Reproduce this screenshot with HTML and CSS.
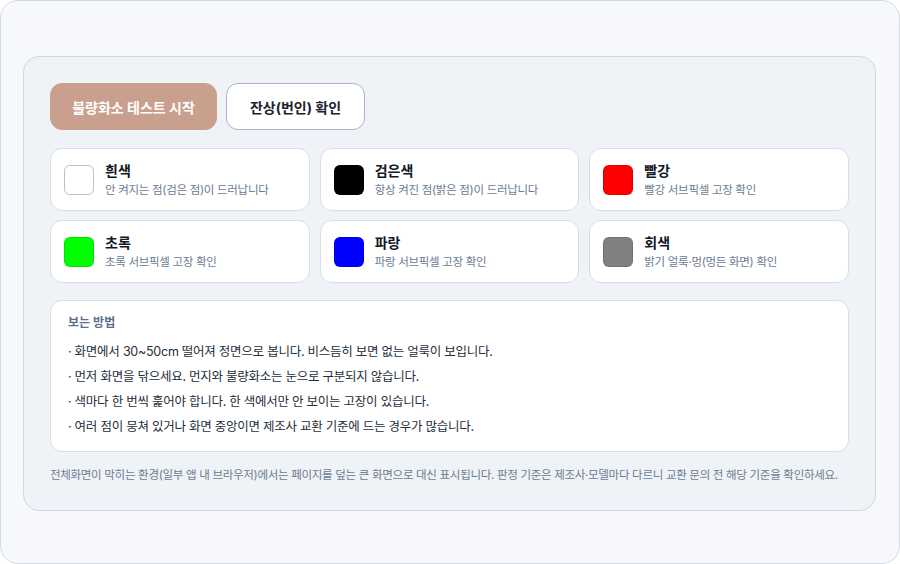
FILE: index.html
```html
<!DOCTYPE html>
<html lang="ko">
<head>
<meta charset="utf-8">
<title>불량화소 테스트</title>
<link rel="stylesheet" href="styles.css">
</head>
<body>
<div class="frame">
  <section class="panel">
    <div class="actions">
      <button class="btn btn-primary">불량화소 테스트 시작</button>
      <button class="btn btn-outline">잔상(번인) 확인</button>
    </div>
    <div class="colors">
      <div class="color-card">
        <span class="swatch swatch-white"></span>
        <div class="color-text">
          <div class="color-name">흰색</div>
          <div class="color-desc">안 켜지는 점(검은 점)이 드러납니다</div>
        </div>
      </div>
      <div class="color-card">
        <span class="swatch swatch-black"></span>
        <div class="color-text">
          <div class="color-name">검은색</div>
          <div class="color-desc">항상 켜진 점(밝은 점)이 드러납니다</div>
        </div>
      </div>
      <div class="color-card">
        <span class="swatch swatch-red"></span>
        <div class="color-text">
          <div class="color-name">빨강</div>
          <div class="color-desc">빨강 서브픽셀 고장 확인</div>
        </div>
      </div>
      <div class="color-card">
        <span class="swatch swatch-green"></span>
        <div class="color-text">
          <div class="color-name">초록</div>
          <div class="color-desc">초록 서브픽셀 고장 확인</div>
        </div>
      </div>
      <div class="color-card">
        <span class="swatch swatch-blue"></span>
        <div class="color-text">
          <div class="color-name">파랑</div>
          <div class="color-desc">파랑 서브픽셀 고장 확인</div>
        </div>
      </div>
      <div class="color-card">
        <span class="swatch swatch-gray"></span>
        <div class="color-text">
          <div class="color-name">회색</div>
          <div class="color-desc">밝기 얼룩·멍(멍든 화면) 확인</div>
        </div>
      </div>
    </div>
    <div class="guide">
      <div class="guide-title">보는 방법</div>
      <ul class="guide-list">
        <li>· 화면에서 30~50cm 떨어져 정면으로 봅니다. 비스듬히 보면 없는 얼룩이 보입니다.</li>
        <li>· 먼저 화면을 닦으세요. 먼지와 불량화소는 눈으로 구분되지 않습니다.</li>
        <li>· 색마다 한 번씩 훑어야 합니다. 한 색에서만 안 보이는 고장이 있습니다.</li>
        <li>· 여러 점이 뭉쳐 있거나 화면 중앙이면 제조사 교환 기준에 드는 경우가 많습니다.</li>
      </ul>
    </div>
    <p class="note">전체화면이 막히는 환경(일부 앱 내 브라우저)에서는 페이지를 덮는 큰 화면으로 대신 표시됩니다. 판정 기준은 제조사·모델마다 다르니 교환 문의 전 해당 기준을 확인하세요.</p>
  </section>
</div>
</body>
</html>
```

FILE: styles.css
```css
* { box-sizing: border-box; }
html, body { margin: 0; padding: 0; }
body {
  font-family: "Inter", "Noto Sans CJK KR", sans-serif;
  background: #ffffff;
  width: 900px;
  height: 564px;
}
.frame {
  width: 900px;
  height: 564px;
  border: 1px solid #d4dae3;
  border-radius: 18px;
  background: #f6f8fb;
  padding: 55px 23px 0 22px;
}
.panel {
  border: 1px solid #cfd7e2;
  border-radius: 16px;
  background: #eff3f7;
  padding: 26px 26px 0 26px;
  height: 455px;
}
.actions {
  display: flex;
  gap: 9px;
}
.btn {
  font-family: inherit;
  height: 47px;
  border-radius: 12px;
  font-size: 14px;
  font-weight: 700;
  padding: 0 18px;
  cursor: pointer;
}
.btn-primary {
  width: 167px;
  background: #c9a08d;
  border: 1px solid #c9a08d;
  color: #ffffff;
}
.btn-outline {
  width: 139px;
  background: #ffffff;
  border: 1px solid #a9b6c8;
  color: #1c2331;
}
.colors {
  margin-top: 18px;
  display: grid;
  grid-template-columns: repeat(3, 1fr);
  gap: 9px 10px;
}
.color-card {
  height: 63px;
  background: #ffffff;
  border: 1px solid #d8dee7;
  border-radius: 12px;
  display: flex;
  align-items: center;
  padding: 0 13px;
  gap: 11px;
}
.swatch {
  width: 30px;
  height: 30px;
  border-radius: 6px;
  flex: none;
  border: 1px solid rgba(0,0,0,0.12);
}
.swatch-white { background: #ffffff; border-color: #b8c1cf; }
.swatch-black { background: #000000; }
.swatch-red { background: #ff0000; }
.swatch-green { background: #00ff00; }
.swatch-blue { background: #0000ff; }
.swatch-gray { background: #808080; }
.color-text { display: flex; flex-direction: column; gap: 2px; }
.color-name {
  font-size: 14px;
  font-weight: 700;
  color: #121826;
  line-height: 18px;
}
.color-desc {
  font-size: 11.5px;
  color: #6b7b92;
  line-height: 16px;
  letter-spacing: -0.3px;
}
.guide {
  margin-top: 17px;
  background: #ffffff;
  border: 1px solid #d8dee7;
  border-radius: 12px;
  height: 152px;
  padding: 13px 17px 0 17px;
}
.guide-title {
  font-size: 12px;
  font-weight: 600;
  color: #5b6f8c;
  line-height: 18px;
}
.guide-list {
  list-style: none;
  margin: 7px 0 0 0;
  padding: 0;
}
.guide-list li {
  font-size: 12.5px;
  color: #252e3c;
  line-height: 25px;
  letter-spacing: -0.25px;
}
.note {
  margin: 15px 0 0 0;
  font-size: 11.5px;
  color: #6b7b92;
  line-height: 16px;
  letter-spacing: -0.3px;
}
```
